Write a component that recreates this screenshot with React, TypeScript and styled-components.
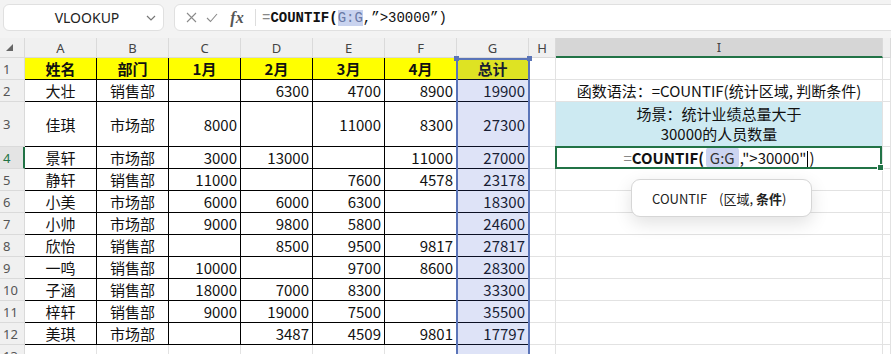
import styled, { createGlobalStyle, css } from "styled-components";

const GlobalStyle = createGlobalStyle`
    html, body {
        margin: 0;
        padding: 0;
        background: #fff;
    }
    body {
        font-family: "Noto Sans CJK SC", "Noto Sans", sans-serif;
        overflow: hidden;
    }
`

const Page = styled.div`
    width: 891px;
    height: 354px;
    overflow: hidden;
    display: flex;
    flex-direction: column;
`

const TopBar = styled.div`
    flex: none;
    height: 38px;
    box-sizing: border-box;
    background: #f3f3f3;
    display: flex;
    align-items: flex-start;
    gap: 10px;
    padding: 4px 0 0 3px;
`

const NameBox = styled.div`
    width: 161px;
    height: 27px;
    box-sizing: border-box;
    background: #fff;
    border: 1px solid #e0e0e0;
    border-radius: 6px;
    display: flex;
    align-items: center;
    padding-right: 7px;
    font-family: "Noto Sans", sans-serif;
    font-size: 14px;
    color: #222;
`

const NameText = styled.span`
    flex: 1;
    text-align: center;
    padding-left: 24px;
`

const FormulaBox = styled.div`
    flex: 1;
    height: 27px;
    margin-right: -12px;
    box-sizing: border-box;
    background: #fff;
    border: 1px solid #e0e0e0;
    border-radius: 6px;
    display: flex;
    align-items: center;
    padding-left: 10px;
`

const IconSlot = styled.span<{ $w: number }>`
    width: ${p => p.$w}px;
    display: flex;
    align-items: center;
    justify-content: center;
    color: #888;
`

const Fx = styled.span`
    font-family: "Liberation Serif", serif;
    font-style: italic;
    font-weight: bold;
    font-size: 16px;
    color: #555;
`

const Divider = styled.span`
    width: 1px;
    height: 17px;
    background: #ddd;
    margin: 0 6px 0 8px;
`

const FormulaText = styled.span`
    font-family: "Liberation Mono", monospace;
    font-size: 14px;
    color: #111;
    white-space: pre;
`

const Eq = styled.span`
    color: #888;
`

const Strong = styled.b`
    font-weight: bold;
`

const RefMark = styled.span`
    background: #c9d3ef;
    color: #6a7aa6;
`

const Sheet = styled.div`
    flex: 1;
    display: grid;
    grid-template-columns: 25px repeat(7, 72px) 27px 327px 1fr;
    grid-template-rows: 20px 22px 22px 45px 22px repeat(9, 22px);
`

type Pos = { $r: number; $c: number }

const placed = css<Pos>`
    grid-row: ${p => p.$r};
    grid-column: ${p => p.$c};
`

const ColHeader = styled.div<Pos & { $active?: boolean }>`
    ${placed};
    box-sizing: border-box;
    display: flex;
    align-items: center;
    justify-content: center;
    background: ${p => (p.$active ? "#d6d6d6" : "#f0f0f0")};
    border-right: 1px solid #dadada;
    border-bottom: ${p => (p.$active ? "2px solid #217346" : "1px solid #dadada")};
    font-family: "Noto Sans", sans-serif;
    font-size: 13px;
    color: #444;
`

const Corner = styled(ColHeader)`
    justify-content: flex-start;
    padding-left: 6px;
`

const RowHeader = styled.div<Pos & { $active?: boolean }>`
    ${placed};
    box-sizing: border-box;
    display: flex;
    align-items: center;
    padding-left: 3px;
    background: ${p => (p.$active ? "#e4e4e4" : "#f0f0f0")};
    border-bottom: 1px solid #dadada;
    border-right: ${p => (p.$active ? "2px solid #217346" : "1px solid #dadada")};
    font-family: "Noto Sans", sans-serif;
    font-size: 13px;
    color: ${p => (p.$active ? "#217346" : "#555")};
`

type Align = "left" | "center" | "right"

const Cell = styled.div<Pos & { $table?: boolean; $align?: Align; $bg?: string; $bold?: boolean }>`
    ${placed};
    box-sizing: border-box;
    display: flex;
    align-items: center;
    justify-content: ${p => (p.$align === "right" ? "flex-end" : p.$align === "left" ? "flex-start" : "center")};
    padding: 0 3px;
    background: ${p => p.$bg ?? "#fff"};
    border-right: 1px solid ${p => (p.$table ? "#000" : "#e2e2e2")};
    border-bottom: 1px solid ${p => (p.$table ? "#000" : "#e2e2e2")};
    font-size: 15px;
    font-weight: ${p => (p.$bold ? "bold" : "normal")};
    color: #111;
    white-space: nowrap;
    overflow: hidden;
`

const NoteCell = styled(Cell)`
    flex-direction: column;
    line-height: 20px;
`

const ActiveCell = styled(Cell)`
    position: relative;
    overflow: visible;

    &::after {
        content: "";
        position: absolute;
        inset: -1px 0 -1px -1px;
        border: 2px solid #217346;
        pointer-events: none;
    }

    &::before {
        content: "";
        position: absolute;
        right: -2px;
        bottom: -3px;
        width: 5px;
        height: 5px;
        background: #217346;
        border: 1px solid #fff;
        z-index: 2;
    }
`

const Chip = styled.span`
    background: #ccd4f1;
    border-radius: 4px;
    padding: 0 4px;
    margin: 0 1px 0 2px;
    color: #333;
`

const Caret = styled.span`
    display: inline-block;
    width: 1px;
    height: 17px;
    background: #000;
    vertical-align: middle;
    margin: 0 1px;
`

const Selection = styled.div`
    grid-column: 8;
    grid-row: 2 / -1;
    margin: 0 -1px 0 -1px;
    border: 2px solid #5a74b8;
    border-bottom: none;
    background: rgba(60, 90, 210, 0.17);
    pointer-events: none;
    position: relative;

    &::before,
    &::after {
        content: "";
        position: absolute;
        top: -4px;
        width: 5px;
        height: 5px;
        background: #5a74b8;
    }
    &::before {
        left: -4px;
    }
    &::after {
        right: -4px;
    }
`

const Tooltip = styled.div`
    grid-column: 10;
    grid-row: 6 / span 3;
    align-self: start;
    justify-self: start;
    margin: 10px 0 0 75px;
    width: 181px;
    height: 38px;
    box-sizing: border-box;
    background: #fff;
    border: 1px solid #d6d6d6;
    border-radius: 9px;
    box-shadow: 0 6px 18px rgba(0, 0, 0, 0.12);
    display: flex;
    align-items: center;
    padding-left: 20px;
    font-size: 13px;
    color: #222;
    z-index: 3;
`

const TipArgs = styled.span`
    margin-left: 12px;
`

const cols = ["A", "B", "C", "D", "E", "F", "G"]
const header = ["姓名", "部门", "1月", "2月", "3月", "4月", "总计"]
const rows = [
    ["大壮", "销售部", "", "6300", "4700", "8900", "19900"],
    ["佳琪", "市场部", "8000", "", "11000", "8300", "27300"],
    ["景轩", "市场部", "3000", "13000", "", "11000", "27000"],
    ["静轩", "销售部", "11000", "", "7600", "4578", "23178"],
    ["小美", "市场部", "6000", "6000", "6300", "", "18300"],
    ["小帅", "市场部", "9000", "9800", "5800", "", "24600"],
    ["欣怡", "销售部", "", "8500", "9500", "9817", "27817"],
    ["一鸣", "销售部", "10000", "", "9700", "8600", "28300"],
    ["子涵", "销售部", "18000", "7000", "8300", "", "33300"],
    ["梓轩", "销售部", "9000", "19000", "7500", "", "35500"],
    ["美琪", "市场部", "", "3487", "4509", "9801", "17797"],
]

// grid row index = sheet row + 1 (row 1 of the grid is the column header)
const ICell = ({ row }: { row: number }) => {
    const r = row + 1
    if (row === 2) return <Cell $r={r} $c={10}>函数语法：=COUNTIF(统计区域, 判断条件)</Cell>
    if (row === 3)
        return (
            <NoteCell $r={r} $c={10} $bg="#cdeaf2">
                <span>场景：统计业绩总量大于</span>
                <span>30000的人员数量</span>
            </NoteCell>
        )
    if (row === 4)
        return (
            <ActiveCell $r={r} $c={10}>
                <span>
                    <Eq>=</Eq>
                    <Strong>COUNTIF(</Strong>
                    <Chip>G:G</Chip>,"&gt;30000"<Caret />)
                </span>
            </ActiveCell>
        )
    return <Cell $r={r} $c={10} />
}

export default function App() {
    const allRows = [header, ...rows]
    return (
        <Page>
            <GlobalStyle />
            <TopBar>
                <NameBox>
                    <NameText>VLOOKUP</NameText>
                    <svg width="10" height="6" viewBox="0 0 10 6">
                        <path d="M1 1 L5 5 L9 1" fill="none" stroke="#777" strokeWidth="1.2" />
                    </svg>
                </NameBox>
                <FormulaBox>
                    <IconSlot $w={12}>
                        <svg width="11" height="11" viewBox="0 0 11 11">
                            <path d="M1 1 L10 10 M10 1 L1 10" stroke="#8a8a8a" strokeWidth="1.1" />
                        </svg>
                    </IconSlot>
                    <IconSlot $w={30}>
                        <svg width="12" height="10" viewBox="0 0 12 10">
                            <path d="M1 5 L4.5 8.5 L11 1" fill="none" stroke="#8a8a8a" strokeWidth="1.1" />
                        </svg>
                    </IconSlot>
                    <IconSlot $w={20}>
                        <Fx>fx</Fx>
                    </IconSlot>
                    <Divider />
                    <FormulaText>
                        <Eq>=</Eq>
                        <Strong>COUNTIF(</Strong>
                        <RefMark>G:G</RefMark>,”&gt;30000”)
                    </FormulaText>
                </FormulaBox>
            </TopBar>
            <Sheet>
                <Corner $r={1} $c={1}>
                    <svg width="7" height="7" viewBox="0 0 7 7">
                        <path d="M7 0 L7 7 L0 7 Z" fill="#666" />
                    </svg>
                </Corner>
                {[...cols, "H", "I", ""].map((c, ci) => (
                    <ColHeader key={`col${ci}`} $r={1} $c={ci + 2} $active={c === "I"}>
                        {c}
                    </ColHeader>
                ))}

                {Array.from({ length: 13 }, (_, i) => {
                    const r = i + 1
                    const gr = r + 1
                    const data = allRows[i]
                    return [
                        <RowHeader key={`h${r}`} $r={gr} $c={1} $active={r === 4}>
                            {r}
                        </RowHeader>,
                        ...cols.map((c, ci) =>
                            data ? (
                                <Cell
                                    key={`${c}${r}`}
                                    $r={gr}
                                    $c={ci + 2}
                                    $table
                                    $bold={r === 1}
                                    $bg={r === 1 ? "#ffff00" : undefined}
                                    $align={r === 1 || ci < 2 ? "center" : "right"}
                                >
                                    {data[ci]}
                                </Cell>
                            ) : (
                                <Cell key={`${c}${r}`} $r={gr} $c={ci + 2} />
                            )
                        ),
                        <Cell key={`H${r}`} $r={gr} $c={9} />,
                        <ICell key={`I${r}`} row={r} />,
                        <Cell key={`J${r}`} $r={gr} $c={11} />,
                    ]
                })}
                <Selection />
                <Tooltip>
                    COUNTIF
                    <TipArgs>
                        (区域, <Strong>条件</Strong>)
                    </TipArgs>
                </Tooltip>
            </Sheet>
        </Page>
    )
}
